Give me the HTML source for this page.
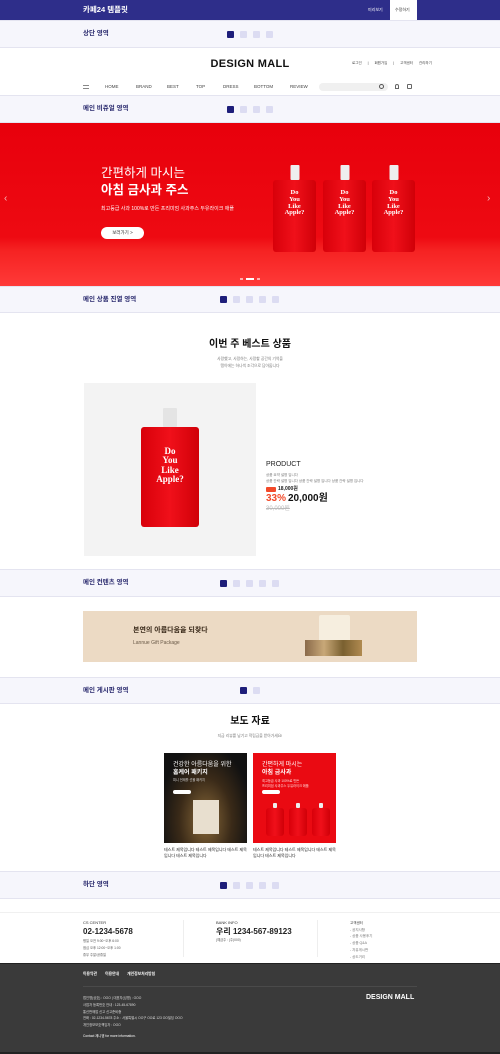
<!DOCTYPE html>
<html><head><meta charset="utf-8">
<style>
*{margin:0;padding:0;box-sizing:border-box}
body{width:500px;height:1054px;position:relative;overflow:hidden;background:#fff;font-family:"Liberation Sans","Noto Sans CJK KR",sans-serif;color:#111}
.a{position:absolute}
.bar{position:absolute;left:0;width:500px;background:#f6f6fc;border-top:1px solid #e4e4f0;border-bottom:1px solid #e4e4f0}
.bar .t{position:absolute;left:83px;top:50%;transform:translateY(-50%);font-size:6.5px;line-height:1;font-weight:bold;color:#2a2a6e}
.sq{position:absolute;width:7px;height:7px;top:50%;margin-top:-3.5px;border-radius:1px;background:#dcdcf2}
.sq.on{background:#1e1e7a}
.pouch{position:absolute;background:linear-gradient(90deg,#d8000a,#f0101a 50%,#d00008);border-radius:3px}
.pouch .cap{position:absolute;left:50%;transform:translateX(-50%);background:#eee;border-radius:1px}
.pouch .txt{position:absolute;left:0;width:100%;text-align:center;color:#fff;font-family:"Liberation Serif",serif;font-weight:bold;line-height:1.05}
</style></head><body>
<div class="a" style="left:0;top:0;width:500px;height:20px;background:#2e2e8a"></div>
<div class="a" style="left:83px;top:5px;font-size:7.5px;line-height:1.2;font-weight:bold;color:#fff">카페24 템플릿</div>
<div class="a" style="left:368px;top:8px;font-size:4px;line-height:1;color:#fff">미리보기</div>
<div class="a" style="left:390px;top:0;width:27px;height:20px;background:#fff"></div>
<div class="a" style="left:395px;top:8px;font-size:4px;line-height:1;color:#333">수정하기</div>

<div class="bar" style="top:20px;height:28px"><div class="t">상단 영역</div>
<div class="sq on" style="left:227px"></div><div class="sq" style="left:240px"></div><div class="sq" style="left:253px"></div><div class="sq" style="left:266px"></div></div>

<div class="a" style="left:0;top:58px;width:500px;text-align:center;font-size:11px;line-height:12px;font-weight:bold;letter-spacing:.3px">DESIGN MALL</div>
<div class="a" style="left:352px;top:62px;font-size:3.5px;line-height:1;color:#444;word-spacing:2px">로그인 &nbsp;| &nbsp;회원가입 &nbsp;| &nbsp;고객센터 &nbsp;관리하기</div>
<div class="a" style="left:83px;top:85px;width:6px;height:4px;border-top:1px solid #888;border-bottom:1px solid #888"></div>
<div class="a" style="left:105px;top:85px;font-size:4.5px;line-height:1;color:#444"><span style="position:absolute;left:0">HOME</span><span style="position:absolute;left:31px">BRAND</span><span style="position:absolute;left:62px">BEST</span><span style="position:absolute;left:91px">TOP</span><span style="position:absolute;left:118px">DRESS</span><span style="position:absolute;left:149px">BOTTOM</span><span style="position:absolute;left:185px">REVIEW</span></div>
<div class="a" style="left:319px;top:83px;width:69px;height:8px;background:#f0f0f0;border-radius:4px"></div>
<div class="a" style="left:379px;top:84px;width:5px;height:5px;border:1px solid #555;border-radius:50%"></div>
<div class="a" style="left:395px;top:84px;width:4px;height:5px;border:1px solid #666;border-radius:2px 2px 0 0"></div>
<div class="a" style="left:407px;top:84px;width:5px;height:5px;border:1px solid #666;border-radius:1px"></div>

<div class="bar" style="top:95px;height:28px"><div class="t">메인 비쥬얼 영역</div>
<div class="sq on" style="left:227px"></div><div class="sq" style="left:240px"></div><div class="sq" style="left:253px"></div><div class="sq" style="left:266px"></div></div>

<div class="a" style="left:0;top:123px;width:500px;height:163px;background:linear-gradient(180deg,#e8000c 0%,#ee0a12 70%,#f52222 78%,#ff3a38 100%)"></div>
<div class="a" style="left:101px;top:166px;font-size:12.5px;line-height:1.2;color:#fff">간편하게 마시는</div>
<div class="a" style="left:101px;top:183px;font-size:12.5px;line-height:1.2;color:#fff;font-weight:bold">아침 금사과 주스</div>
<div class="a" style="left:101px;top:206px;font-size:5px;line-height:1.2;color:#fff">최고등급 사과 100%로 만든 프리미엄 사과주스 두유라이크 애플</div>
<div class="a" style="left:101px;top:227px;width:43px;height:12px;background:#fff;border-radius:6px;font-size:4.5px;color:#222;text-align:center;line-height:12px">보러가기 &gt;</div>
<div class="a" style="left:4px;top:194px;font-size:10px;line-height:1;color:#fff;opacity:.7">‹</div>
<div class="a" style="left:487px;top:194px;font-size:10px;line-height:1;color:#fff;opacity:.7">›</div>
<div class="pouch" style="left:273px;top:180px;width:43px;height:72px"><div class="cap" style="top:-15px;width:9px;height:15px"></div><div class="txt" style="top:10px;font-size:6.5px">Do<br>You<br>Like<br>Apple?</div></div>
<div class="pouch" style="left:323px;top:180px;width:43px;height:72px"><div class="cap" style="top:-15px;width:9px;height:15px"></div><div class="txt" style="top:10px;font-size:6.5px">Do<br>You<br>Like<br>Apple?</div></div>
<div class="pouch" style="left:372px;top:180px;width:43px;height:72px"><div class="cap" style="top:-15px;width:9px;height:15px"></div><div class="txt" style="top:10px;font-size:6.5px">Do<br>You<br>Like<br>Apple?</div></div>
<div class="a" style="left:240px;top:278px;width:3px;height:2px;background:#fff;opacity:.6"></div>
<div class="a" style="left:246px;top:278px;width:8px;height:2px;background:#fff"></div>
<div class="a" style="left:257px;top:278px;width:3px;height:2px;background:#fff;opacity:.6"></div>

<div class="bar" style="top:286px;height:27px"><div class="t">메인 상품 진열 영역</div>
<div class="sq on" style="left:220px"></div><div class="sq" style="left:233px"></div><div class="sq" style="left:246px"></div><div class="sq" style="left:259px"></div><div class="sq" style="left:272px"></div></div>

<div class="a" style="left:0;top:339px;width:500px;text-align:center;font-size:10px;line-height:12px;font-weight:bold">이번 주 베스트 상품</div>
<div class="a" style="left:0;top:356px;width:500px;text-align:center;font-size:3.8px;color:#777;line-height:6.5px">사랑했고, 사랑하는, 사랑할 공간의 기억을<br>탱이에는 하나씩 조각으로 담아둡니다</div>
<div class="a" style="left:84px;top:383px;width:172px;height:173px;background:#f3f3f3"></div>
<div class="pouch" style="left:141px;top:427px;width:58px;height:100px"><div class="cap" style="top:-19px;width:14px;height:19px;background:#e4e4e4"></div><div class="txt" style="top:20px;font-size:9px">Do<br>You<br>Like<br>Apple?</div></div>
<div class="a" style="left:266px;top:461px;font-size:7px;line-height:1;color:#222">PRODUCT</div>
<div class="a" style="left:266px;top:472px;font-size:3.5px;color:#777;line-height:6px">상품 요약 설명 입니다<br>상품 간략 설명 입니다 상품 간략 설명 입니다 상품 간략 설명 입니다</div>
<div class="a" style="left:266px;top:487px;width:10px;height:5px;background:#f24a2a;border-radius:1px"></div>
<div class="a" style="left:278px;top:486px;font-size:5px;line-height:1.2;font-weight:bold;color:#222">18,000원</div>
<div class="a" style="left:266px;top:493px;font-size:10px;line-height:1.2;font-weight:bold;color:#f24a2a">33%</div>
<div class="a" style="left:288px;top:493px;font-size:10px;line-height:1.2;font-weight:bold;color:#111">20,000원</div>
<div class="a" style="left:266px;top:506px;font-size:6px;line-height:1.2;color:#bbb;text-decoration:line-through">30,000원</div>

<div class="bar" style="top:569px;height:28px"><div class="t">메인 컨텐츠 영역</div>
<div class="sq on" style="left:220px"></div><div class="sq" style="left:233px"></div><div class="sq" style="left:246px"></div><div class="sq" style="left:259px"></div><div class="sq" style="left:272px"></div></div>

<div class="a" style="left:83px;top:611px;width:334px;height:51px;background:#ecdac4"></div>
<div class="a" style="left:133px;top:627px;font-size:7px;line-height:1.2;font-weight:bold;color:#3a2a1a">본연의 아름다움을 되찾다</div>
<div class="a" style="left:133px;top:640px;font-size:5px;line-height:1.2;color:#6a5a48">Lannue Gift Package</div>
<div class="a" style="left:319px;top:615px;width:31px;height:35px;background:#f6eedf;border-radius:2px"></div>
<div class="a" style="left:305px;top:640px;width:57px;height:16px;background:linear-gradient(90deg,#8a6a4a,#c8a878,#7a6030,#b08a50)"></div>

<div class="bar" style="top:677px;height:27px"><div class="t">메인 게시판 영역</div>
<div class="sq on" style="left:240px"></div><div class="sq" style="left:253px"></div></div>

<div class="a" style="left:0;top:716px;width:500px;text-align:center;font-size:10px;line-height:12px;font-weight:bold">보도 자료</div>
<div class="a" style="left:0;top:734px;width:500px;text-align:center;font-size:3.8px;line-height:1.2;color:#777">지금 리뷰를 남기고 적립금을 받아가세요!</div>
<div class="a" style="left:164px;top:753px;width:83px;height:90px;background:radial-gradient(ellipse at 50% 75%,#8a6a3a 0%,#3a2a18 45%,#111 80%)"></div>
<div class="a" style="left:173px;top:761px;font-size:6px;color:#fff;line-height:8px">건강한 아름다움을 위한<br><b>홈케어 패키지</b></div>
<div class="a" style="left:173px;top:779px;font-size:3.2px;line-height:1.2;color:#ddd">피니 언제를 선물 패키지</div>
<div class="a" style="left:173px;top:790px;width:18px;height:4px;background:#fff;border-radius:2px"></div>
<div class="a" style="left:193px;top:800px;width:26px;height:34px;background:#e8dfcf"></div>
<div class="a" style="left:253px;top:753px;width:83px;height:90px;background:#ea0a12"></div>
<div class="a" style="left:262px;top:761px;font-size:6px;color:#fff;line-height:8px">간편하게 마시는<br><b>아침 금사과</b></div>
<div class="a" style="left:262px;top:779px;font-size:3.2px;color:#fdd;line-height:4.5px">최고등급 사과 100%로 만든<br>프리미엄 사과주스 두유라이크 애플</div>
<div class="a" style="left:262px;top:790px;width:18px;height:4px;background:#fff;border-radius:2px"></div>
<div class="pouch" style="left:266px;top:808px;width:18px;height:28px"><div class="cap" style="top:-5px;width:4px;height:5px"></div></div>
<div class="pouch" style="left:289px;top:808px;width:18px;height:28px"><div class="cap" style="top:-5px;width:4px;height:5px"></div></div>
<div class="pouch" style="left:312px;top:808px;width:18px;height:28px"><div class="cap" style="top:-5px;width:4px;height:5px"></div></div>
<div class="a" style="left:164px;top:847px;width:86px;font-size:4px;color:#222;line-height:5.5px">테스트 제목입니다 테스트 제목입니다 테스트 제목입니다 테스트 제목입니다</div>
<div class="a" style="left:253px;top:847px;width:86px;font-size:4px;color:#222;line-height:5.5px">테스트 제목입니다 테스트 제목입니다 테스트 제목입니다 테스트 제목입니다</div>

<div class="bar" style="top:871px;height:28px"><div class="t">하단 영역</div>
<div class="sq on" style="left:220px"></div><div class="sq" style="left:233px"></div><div class="sq" style="left:246px"></div><div class="sq" style="left:259px"></div><div class="sq" style="left:272px"></div></div>

<div class="a" style="left:0;top:912px;width:500px;border-top:1px solid #f0f0f0"></div>
<div class="a" style="left:83px;top:921px;font-size:4px;line-height:1;color:#333">CS CENTER</div>
<div class="a" style="left:83px;top:928px;font-size:8px;line-height:1;font-weight:bold;color:#222">02-1234-5678</div>
<div class="a" style="left:83px;top:938px;font-size:3.3px;color:#555;line-height:7px">평일 오전 9:00~오후 6:00<br>점심 오후 12:00~오후 1:00<br>휴무 주말/공휴일</div>
<div class="a" style="left:183px;top:920px;height:37px;border-left:1px solid #eee"></div>
<div class="a" style="left:216px;top:921px;font-size:4px;line-height:1;color:#333">BANK INFO</div>
<div class="a" style="left:216px;top:928px;font-size:8px;line-height:1;font-weight:bold;color:#222">우리 1234-567-89123</div>
<div class="a" style="left:216px;top:939px;font-size:3.3px;line-height:1;color:#555">(예금주 : (주)000)</div>
<div class="a" style="left:317px;top:920px;height:37px;border-left:1px solid #eee"></div>
<div class="a" style="left:350px;top:920px;font-size:3.5px;color:#333;line-height:6.7px">고객센터<br><span style="color:#777">- 공지사항<br>- 상품 사용후기<br>- 상품 Q&amp;A<br>- 자유게시판<br>- 상도거리</span></div>
<div class="a" style="left:0;top:963px;width:500px;height:89px;background:#3a3a3a;border-top:1px solid #222"></div>
<div class="a" style="left:0;top:1052px;width:500px;height:2px;background:#222"></div>
<div class="a" style="left:83px;top:973px;font-size:3.8px;line-height:1;color:#fff;font-weight:bold;word-spacing:3px">이용약관 &nbsp;이용안내 &nbsp;개인정보처리방침</div>
<div class="a" style="left:83px;top:986px;width:334px;border-top:1px solid #4a4a4a"></div>
<div class="a" style="left:83px;top:995px;font-size:3.3px;color:#ddd;line-height:6.8px">법인명(상호) : OOO | 대표자(성명) : OOO<br>사업자 등록번호 안내 : 123-45-67890<br>통신판매업 신고 신고준비중<br>전화 : 02-1234-5678 주소 : 서울특별시 OO구 OO로 123 OO빌딩 OOO<br>개인정보보호책임자 : OOO</div>
<div class="a" style="left:83px;top:1035px;font-size:3.3px;line-height:1;color:#fff">Contact 제니엠 for more information.</div>
<div class="a" style="left:366px;top:994px;font-size:7px;line-height:1;font-weight:bold;color:#fff">DESIGN MALL</div>
</body></html>
